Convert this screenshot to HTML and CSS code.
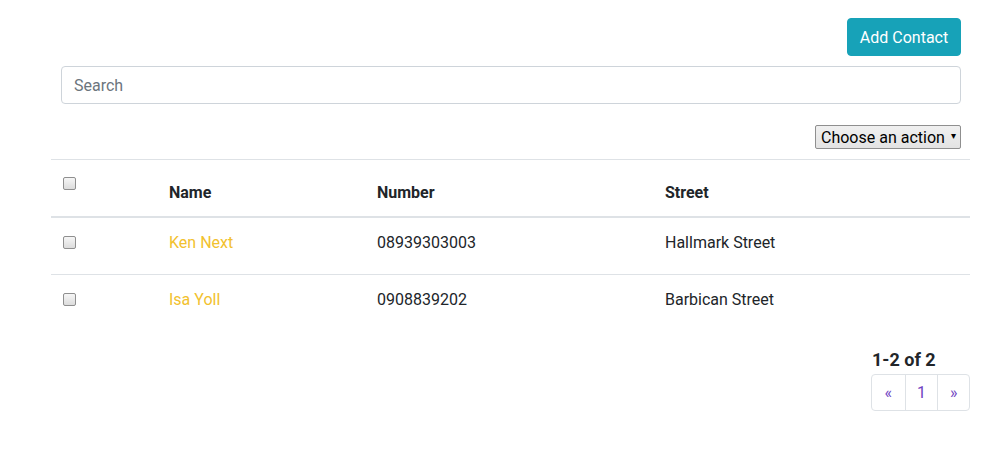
FILE: index.html
```html
<!DOCTYPE html>
<html>
<head>
<meta charset="utf-8">
<link rel="stylesheet" href="styles.css">
</head>
<body>
<div class="page">
  <div class="top">
    <div class="btn-row"><button class="btn-add">Add Contact</button></div>
    <input class="search" type="text" placeholder="Search">
    <div class="action-row">
      <div class="select">Choose an action <span class="caret">&#9662;</span></div>
    </div>
  </div>
  <table class="contacts">
    <thead>
      <tr>
        <th class="c-check"><span class="cb"></span></th>
        <th class="c-name">Name</th>
        <th class="c-num">Number</th>
        <th>Street</th>
      </tr>
    </thead>
    <tbody>
      <tr>
        <td class="c-check"><span class="cb"></span></td>
        <td><a class="link">Ken Next</a></td>
        <td>08939303003</td>
        <td>Hallmark Street</td>
      </tr>
      <tr>
        <td class="c-check"><span class="cb"></span></td>
        <td><a class="link">Isa Yoll</a></td>
        <td>0908839202</td>
        <td>Barbican Street</td>
      </tr>
    </tbody>
  </table>
  <div class="pager-wrap">
    <div class="pager">
      <div class="count">1-2 of 2</div>
      <ul class="pagination">
        <li class="pg">&laquo;</li>
        <li class="pg">1</li>
        <li class="pg">&raquo;</li>
      </ul>
    </div>
  </div>
</div>
</body>
</html>
```
FILE: styles.css
```css
* { box-sizing: border-box; }
body {
  margin: 0;
  font-family: Roboto, "Liberation Sans", sans-serif;
  font-size: 16px;
  line-height: 24px;
  color: #212529;
  background: #fff;
}
.page {
  margin-left: 51px;
  width: 919px;
  padding-top: 18px;
}
.top {
  padding: 0 9px 0 10px;
}
.btn-row {
  display: flex;
  justify-content: flex-end;
}
.btn-add {
  font-family: Roboto, "Liberation Sans", sans-serif;
  font-size: 16px;
  line-height: 24px;
  height: 38px;
  width: 114px;
  padding: 2px 0 0 0;
  color: #fff;
  background: #17a2b8;
  border: 1px solid #17a2b8;
  border-radius: 4px;
}
.search {
  display: block;
  width: 100%;
  height: 38px;
  margin-top: 10px;
  padding: 6px 12px;
  font-family: Roboto, "Liberation Sans", sans-serif;
  font-size: 16px;
  color: #495057;
  border: 1px solid #ced4da;
  border-radius: 4px;
  outline: none;
}
.search::placeholder { color: #6c757d; }
.action-row {
  display: flex;
  justify-content: flex-end;
  margin-top: 21px;
}
.select {
  height: 24px;
  width: 146px;
  padding: 1px 4px 0 5px;
  font-size: 16px;
  line-height: 22px;
  color: #000;
  background: linear-gradient(#f0f0f0, #e3e3e3);
  border: 1px solid #8f8f8f;
  border-radius: 2px;
  display: flex;
  justify-content: space-between;
  align-items: center;
  white-space: nowrap;
}
.caret { font-size: 10px; line-height: 10px; margin-top: -4px; }
.contacts {
  width: 100%;
  table-layout: fixed;
  border-collapse: collapse;
  margin-top: 10px;
}
.contacts th, .contacts td {
  text-align: left;
  padding: 13px 12px 19px;
  border-top: 1px solid #dee2e6;
  vertical-align: top;
}
.contacts th {
  font-weight: bold;
  vertical-align: bottom;
  border-bottom: 2px solid #dee2e6;
  height: 57px;
  padding-top: 12px;
  padding-bottom: 11px;
}
.contacts th.c-check { vertical-align: top; }
.contacts tbody tr:first-child td { border-top: 0; }
.c-check { width: 106px; }
.c-name { width: 208px; }
.c-num { width: 288px; }
.cb {
  display: inline-block;
  width: 13px;
  height: 13px;
  border: 1px solid #8f8f8f;
  border-radius: 2px;
  background: linear-gradient(#f6f6f6, #dcdcdc);
  vertical-align: top;
}
th .cb { margin-top: 5px; }
td .cb { margin-top: 5px; }
.link { color: #f2c12e; text-decoration: none; }
.pager-wrap {
  display: flex;
  justify-content: flex-end;
  margin-top: 17px;
}
.pager { width: 99px; }
.count {
  font-weight: bold;
  font-size: 18px;
  line-height: 24px;
  padding-left: 1px;
}
.pagination {
  list-style: none;
  margin: 2px 0 0 0;
  padding: 0;
  display: flex;
}
.pg {
  height: 37px;
  line-height: 35px;
  text-align: center;
  color: #6f42c1;
  border: 1px solid #dee2e6;
  margin-left: -1px;
  font-size: 16px;
}
.pg:first-child { width: 35px; margin-left: 0; border-radius: 4px 0 0 4px; }
.pg:nth-child(2) { width: 34px; }
.pg:last-child { width: 33px; border-radius: 0 4px 4px 0; }
```
